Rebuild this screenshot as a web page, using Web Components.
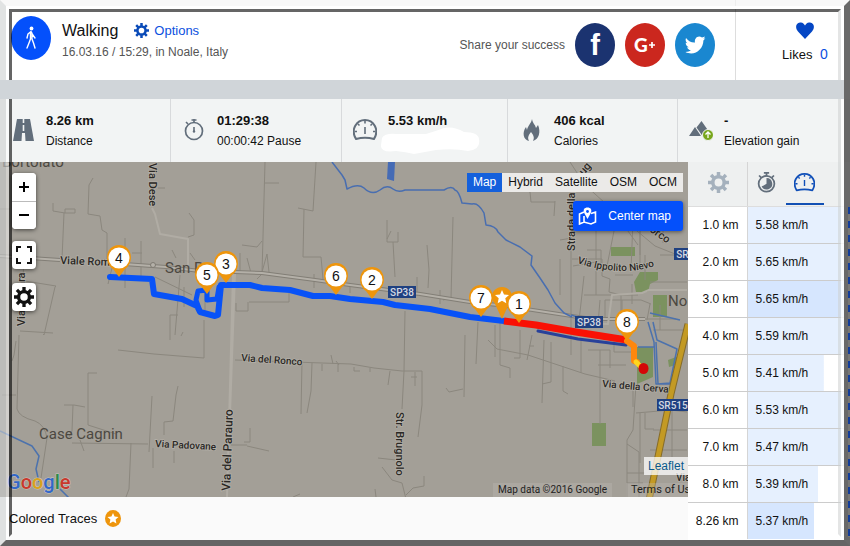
<!DOCTYPE html>
<html lang="en">
<head>
<meta charset="utf-8">
<title>Walking - 8.26 km</title>
<style>
  body {
    margin: 0;
    background: #fff;
    color: #111;
    font-family: "Liberation Sans", Arial, sans-serif;
    font-size: 12px;
  }
</style>
</head>
<body>
<workout-page>
  <workout-header slot="header"></workout-header>
  <stat-item slot="stats" icon="road" value="8.26 km">Distance</stat-item>
  <stat-item slot="stats" icon="timer" value="01:29:38">00:00:42 Pause</stat-item>
  <stat-item slot="stats" icon="gauge" value="5.53 km/h">
    <svg width="100" height="28" viewBox="0 0 100 28" style="display:block;margin:-4px 0 -4px -8px"><path d="M2 11Q5 6 16 7H46Q56 4 64 1Q74-1 84 5Q98 5 99 12Q101 23 88 24Q74 21 56 23L34 27Q26 25 16 24Q0 26 1 18Z" fill="#fff"/></svg>
  </stat-item>
  <stat-item slot="stats" icon="flame" value="406 kcal">Calories</stat-item>
  <stat-item slot="stats" icon="hills" value="-">Elevation gain</stat-item>
  <route-map slot="map">
    <map-pin x="119" y="96">4</map-pin>
    <map-pin x="226" y="102">3</map-pin>
    <map-pin x="207" y="113">5</map-pin>
    <map-pin x="336" y="114">6</map-pin>
    <map-pin x="372" y="118">2</map-pin>
    <map-pin x="502" y="135" star></map-pin>
    <map-pin x="481" y="136">7</map-pin>
    <map-pin x="519" y="142">1</map-pin>
    <map-pin x="627" y="160">8</map-pin>
  </route-map>
  <split-table slot="splits"></split-table>
</workout-page>

<template id="pageTemplate">
  <style>
    :host { display: flex; flex-direction: column; position: relative; min-height: 100vh; box-sizing: border-box; padding-bottom: 6px; overflow: hidden; }
    .band { height: 19px; background: #d0d5d9; margin-right: 6px; position: relative; z-index: 3; }
    .stats { display: grid; grid-template-columns: 171fr 171fr 166fr 170fr 172fr; background: #f2f4f4; height: 63px; }
    .main { flex: 1; display: grid; grid-template-columns: minmax(0, 1fr) 162px; }
    .left { display: flex; flex-direction: column; }
    .traces { display: flex; align-items: center; gap: 8px; height: 43px; padding-left: 9px; background: #fafafa; font-size: 13px; }
    /* bevelled picture frame laid over the page */
    .frame { position: absolute; inset: 0; z-index: 2; pointer-events: none; display: flex;
      border: 6px solid; border-color: rgba(245,245,245,.7) rgba(80,80,80,.85) rgba(85,85,85,.9) rgba(205,208,208,.6); }
    .frame div { flex: 1; display: flex; border: 3px solid; border-color: #fff rgba(255,255,255,.8) transparent rgba(255,255,255,.5); }
    .frame div div { border-color: rgba(0,0,0,.6) rgba(205,208,208,.55) transparent rgba(0,0,0,.6); }
  </style>
  <slot name="header"></slot>
  <div class="band"></div>
  <div class="stats"><slot name="stats"></slot></div>
  <div class="main">
    <div class="left">
      <slot name="map"></slot>
      <div class="traces">Colored Traces
        <svg width="16" height="17" viewBox="0 0 16 17"><ellipse cx="8" cy="8.5" rx="8" ry="8.5" fill="#ee950c"/><path d="M8 3l1.6 3.6 3.9.4-2.9 2.6.8 3.9L8 11.5l-3.4 2 .8-3.9L2.5 7l3.9-.4z" fill="#fff"/></svg>
      </div>
    </div>
    <slot name="splits"></slot>
  </div>
  <div class="frame"><div><div></div></div></div>
</template>

<template id="headerTemplate">
  <style>
    :host { display: flex; height: 80px; background: #fff; }
    .sport { margin: 16px 11px 0; }
    .title { flex: 1; padding-top: 19px; }
    .row { display: flex; align-items: center; height: 23px; }
    h1 { font-size: 16px; font-weight: normal; margin: 0 16px 0 0; }
    a { color: #0b50e0; text-decoration: none; font-size: 13px; display: flex; align-items: center; gap: 5px; }
    .when { color: #555; line-height: 20px; }
    .share { display: flex; align-items: center; gap: 10px; padding: 10px 20px 0 0; color: #555; }
    .likes { box-sizing: border-box; width: 115px; border-left: 1px solid #ddd; padding: 22px 0 0 24px; font-size: 13px; text-align: center; }
    .likes svg { display: block; margin: 0 auto; }
    .likes div { line-height: 20px; margin-top: 5px; }
    .likes svg, .likes div { margin-left: auto; margin-right: auto; }
    .likes b { color: #0b50e0; font-weight: normal; margin-left: 4px; font-size: 14px; }
  </style>
  <svg class="sport" width="40" height="44" viewBox="0 0 40 44"><ellipse cx="20" cy="22" rx="20" ry="22" fill="#0450fb"/><g fill="none" stroke="#fff" stroke-width="1.4" stroke-linecap="round" stroke-linejoin="round"><path d="M20 15.500l-3 2.500-1 4M20 15.500l1.500 3 2.500 3.500M19.500 16v7l-1.500 4-2 5M21 17v6l1.500 4 1.500 5"/></g><circle cx="20.500" cy="12.500" r="1.900" fill="#fff"/></svg>
  <div class="title">
    <div class="row">
      <h1>Walking</h1>
      <a href="#options"><ui-icon name="gear" size="15" style="color:#0a4bb8"></ui-icon>Options</a>
    </div>
    <div class="when">16.03.16 / 15:29, in Noale, Italy</div>
  </div>
  <div class="share">
    <span>Share your success</span>
    <share-button color="#1b3370" label="Facebook"></share-button>
    <share-button color="#cb271e" label="Google Plus"></share-button>
    <share-button color="#1a87d0" label="Twitter"></share-button>
  </div>
  <div class="likes">
    <svg width="18" height="17" viewBox="0 0 18 17"><path d="M9 17L2 9.500C-1 6-.500 1 4 .500 6.500 0 8 1.500 9 3.500 10 1.500 11.500 0 14 .500 18.500 1 19 6 16 9.500Z" fill="#0446c4"/></svg>
    <div>Likes <b>0</b></div>
  </div>
</template>

<template id="mapTemplate">
  <style>
    :host { display: block; position: relative; flex: 1; min-height: 335px; overflow: hidden; background: #a39f97; }
    .ground { position: absolute; inset: 0; width: 100%; height: 100%; font-family: Roboto, sans-serif; }
    .tools { position: absolute; left: 12px; top: 11px; display: flex; flex-direction: column; }
    .tools > * { border-radius: 4px; box-shadow: 0 1px 4px rgba(0,0,0,.6); background: #fff; }
    button { border: 0; margin: 0; padding: 0; font: inherit; color: inherit; background: none; cursor: pointer; }
    .tools button { display: flex; align-items: center; justify-content: center; width: 24px; height: 28px; background: #fff; }
    .zoom { display: flex; flex-direction: column; overflow: hidden; margin-bottom: 12px; }
    .zoom button + button { border-top: 1px solid #bbb; }
    .full { margin-bottom: 14px; }
    .right { position: absolute; top: 11px; right: 5px; display: flex; flex-direction: column; align-items: flex-end; gap: 9px; }
    .layers { display: flex; background: #ebeae8; }
    .layers button { padding: 0 6px; line-height: 19px; }
    .layers .on { background: #1460dc; color: #fff; }
    .center { display: flex; align-items: center; gap: 11px; height: 30px; border-radius: 3px; background: #0450fb; color: #fff; box-shadow: 0 1px 4px rgba(0,0,0,.5); }
    .right .center { padding: 0 12px 0 5px; }
    .credit { position: absolute; right: 0; bottom: 0; display: flex; flex-direction: column; align-items: flex-end; font: 11px/14px Roboto, sans-serif; }
    .leaflet { background: rgba(255,255,255,.75); color: #0a5a8c; text-decoration: none; font: 12px/18px "Liberation Sans", Arial, sans-serif; padding: 0 4px; margin-bottom: 8px; }
    .legal { display: flex; gap: 14px; color: #222; white-space: nowrap; }
    .legal span, .legal a { background: rgba(190,187,180,.35); padding: 0 5px; color: inherit; text-decoration: none; }
    .legal span { font-size: 10px; }
    .legal a { width: 52px; overflow: hidden; }
  </style>
  <svg class="ground" viewBox="0 162 688 335" preserveAspectRatio="xMidYMid slice">
    <g fill="#7b925f">
      <path d="M611 247h24v9h-24zM592 423h14v23h-14zM653 295h14v22h-14zM634 282l6-10h18v8l-8 4-2 8h-12z"/>
      <path d="M637 347h16v30l-16 7zM668 360l11-4v8l-10 3z"/>
    </g>
    <g fill="none" stroke="#8b877e">
      <path d="M93 178l-4 7-1 29 12 2 2 14 5 3v28M53 203v8l12 2h10v-4H65v4M64 213l-2 46M189 213l5 7v15l-6 2M158 188h7M24 258l-3 60M0 209h10M25 281l31 5-1 1-11 48-1-1M20 331l33 2M19 335l-2 74q2 8 18 12 10 4 12 17l-6 40M16 341l-2 14-2 6M2 395h14M88 373v52l28 9M88 373h9M64 405h10l11 2M73 405l-1 26-4 8M72 443l76 1M80 440l4 11M131 443l-2 46-3 8M152 396l-3 56M178 386l-2 9-3 26-9 1v13M153 448v20M174 451v12M118 350l36 4 50 4V320M170 340v-25h8M181 336l2-4M108 284l4-16M125 238v50M141 241v38M132 253h10M172 250l4 8M190 253l5 7M180 275l-5 60M205 285v30M184 287v20"/>
      <path d="M265 162l-3 112-5 5M265 183h14M316 162l-3 49-15-3M304 209l-1 48 18 0 2 22M242 245l15 2 5-6M240 253v20M247 258l4 15M262 272l5-18 2 18M387 220v22h11v-10M393 242l2 35M391 231l-4 8M427 245l2 25-1 18M453 217l-2 82M417 277v19M440 290v14M443 300l8-2M249 302h40v-14M236 303v8h12v-9M314 274v14M350 284v9M405 311l-1 60M404 371l-2 38M235 360l30 1 86 3 23 4 28 3h20v34l-4 32M302 361l-1 53M312 363l-1 28-4 22M322 364v7M338 364v8M354 367v4h6M370 368v4M390 371l-2 14M415 372v14M411 377h6M465 335l-1 62M446 388l3 4 14-3M250 428v14h-6M247 446l22 5M231 445h16M378 458l18 2M382 467l10 13 10 3 4 16M406 495l7-7 11-2v-10M376 497l-1-8M293 497l7-3M331 355l2 9M336 361l3 4"/>
      <path d="M570 162l15 23 40 36 30 25M571 210v145M500 180l30 12 1 10h24M555 201l-1 15M596 225v70M614 231l-7 35M633 220l-2 50M640 230v38M655 246l30 12M596 262l-23 4M650 282h37M572 259h30v17l8 3-1 13 12 3v18M560 259v36M584 295h54M584 276l-5 45M605 320v-20h36l10 4M640 319h36M632 284v20M650 304l-3 16M600 300l-2 24M622 300v20M653 330h34M660 305v25"/>
      <path d="M488 340l9 9 31 6 33 11 24 8 30 7M500 323v42l10 3v10M495 325v32M478 322l-2 42M544 340l-2 63M563 366v25l5 3M532 335l-5 25M581 338v35M600 350v74M598 365h28M614 340v12h20M520 330v28h-6M534 346h-5M551 342v40l-9 2M588 350h22v18M636 384l-3 46-6 10v60M636 413l35-3 16 2M640 413v50M627 444l12 8v48M627 473h18M627 483h16M645 413v16h9M650 450h37M653 430h34M660 460l-5 12M672 387v70M633 385v22"/>
      <path d="M155 277l37 18M560 240l12-2M600 225h40v30M615 275h18M645 255v25M620 220l18 25M587 250h14v16M663 213v30M660 255h27"/>
    </g>
    <g fill="none" stroke-linejoin="round">
      <path d="M0 256l60 4M110 263l56 4 34 4 35 1 27 1 53 7 35 5 70 9 50 8 37 4 78 12 20 1h40" stroke="#827e76" stroke-width="4"/>
      <path d="M0 256l60 4M110 263l56 4 34 4 35 1 27 1 53 7 35 5 70 9 50 8 37 4 78 12 20 1h40" stroke="#b4b0a8" stroke-width="2"/>
      <path d="M235 274l-5 140M233 274l-6 223M577 323l31 1 4-29 30-2 7-3h38M152 208l3 6 5 20 28 5v27" stroke="#b0aca4" stroke-width="2"/>
      <path d="M332 162L342 175 345 180 347 189Q358 183 364 188 372 196 380 190 387 184 393 189 398 193 405 190L430 190 444 190Q452 185 455 190 459 191 462 203L472 204Q478 202 484 213L486 225Q496 226 498 232L506 240 520 247 532 256 531 265 540 278 548 290 555 303 564 313 572 317" stroke="#496eb0" stroke-width="1.500" stroke-linejoin="round"/>
      <path d="M0 431l32 15 7 10-3 13 3 13M60 489l10 10M571 315l26 8M648 322l6 20 2 42h14l6-16M653 322l4 18 20 9-7 34-12 1-2-42M638 347h17M680 320l-30-7" stroke="#4c72ad" stroke-width="1.500"/>
      <path d="M688 324l-17 70-22 106" stroke="#866c29" stroke-width="7"/>
      <path d="M688 324l-17 70-22 106" stroke="#c39a24" stroke-width="5"/>
    </g>
    <path d="M388 162h7l-1 19-7-2z" fill="#456bb5"/>
    <circle cx="153" cy="265" r="2.500" fill="#b5b1a9" stroke="#7e7a72"/>
    <g fill="#2a2825" font-size="11" font-weight="500" stroke="#b4b0a8" stroke-width="1.500" paint-order="stroke">
      <text transform="translate(60 264) rotate(2)">Viale Rom</text>
      <text transform="translate(149 163) rotate(90)">Via Dese</text>
      <text transform="translate(25 326) rotate(-90)">Via Ferrara</text>
      <text transform="translate(241 361) rotate(4)" font-size="10">Via del Ronco</text>
      <text transform="translate(396 412) rotate(90)" font-size="11">Str. Brugnolo</text>
      <text transform="translate(230 491) rotate(-88)" font-size="12">Via del Parauro</text>
      <text transform="translate(155 447) rotate(3)" font-size="10">Via Padovane</text>
      <text transform="translate(602 387) rotate(5)" font-size="10">Via della Cerva</text>
      <text transform="translate(575 251) rotate(-90)">Strada della</text>
      <text transform="translate(580 180) rotate(-50)">sug</text>
      <text transform="translate(649 231) rotate(35)">orco</text>
      <path id="nievo" d="M577 263Q622 278 658 265" fill="none" stroke="none"/>
      <text font-size="10"><textPath href="#nievo">Via Ippolito Nievo</textPath></text>
      <text x="676" y="481" font-size="10">Via</text>
    </g>
    <g fill="#4c4841" font-size="15">
      <text x="2" y="167">Bortolato</text>
      <text x="165" y="273">San P</text>
      <text x="39" y="439">Case Cagnin</text>
      <text x="668" y="306">No</text>
    </g>
    <g fill="#1f4080"><path d="M388 286h28v12h-28zM575 316h28v12h-28zM674 248h28v12h-28zM657 399h31v12h-31z"/></g>
    <g fill="#d5d9e2" font-size="10" font-weight="500" text-anchor="middle">
      <text x="402" y="296">SP38</text><text x="589" y="326">SP38</text><text x="691" y="258">SR515</text><text x="673" y="409">SR515</text>
    </g>
    <text x="7" y="489" font-size="20" font-weight="500" stroke="#c8c6c0" stroke-width="1" paint-order="stroke"><tspan fill="#3267c8">G</tspan><tspan fill="#c9382c">o</tspan><tspan fill="#d9a21c">o</tspan><tspan fill="#3267c8">g</tspan><tspan fill="#2d8b47">l</tspan><tspan fill="#c9382c">e</tspan></text>
    <g fill="none" stroke-linejoin="round" stroke-linecap="round">
      <path d="M110 277L152 279 154 294 182 299 197 306 200 312 215 316 218 315 221 285 250 285 262 288 290 290 313 296 330 296 350 299 383 302 395 305 430 309 470 317 504 321" stroke="#0852f7" stroke-width="6"/>
      <path d="M200 311l-4-11 2-9 9-1v10l10-1 2-12" stroke="#0852f7" stroke-width="5"/>
      <path d="M538 331l40 8 48 6" stroke="#28419a" stroke-width="3"/>
      <path d="M504 321l32 4 40 7 51 8" stroke="#f91105" stroke-width="7" stroke-linecap="butt"/>
      <path d="M627 341l7 5v15l3 1" stroke="#ff870d" stroke-width="6"/>
      <path d="M636 362l5 5" stroke="#ffd51e" stroke-width="5"/>
    </g>
    <ellipse cx="643.500" cy="368.500" rx="5" ry="5.500" fill="#d30808"/>
  </svg>
  <slot></slot>
  <div class="tools">
    <div class="zoom">
      <button aria-label="Zoom in"><svg width="12" height="12"><path d="M6 1v10M1 6h10" stroke="#000" stroke-width="2"/></svg></button>
      <button aria-label="Zoom out"><svg width="12" height="12"><path d="M1 5h10" stroke="#000" stroke-width="2"/></svg></button>
    </div>
    <button class="full" aria-label="Full screen"><svg width="18" height="18"><path d="M2 6V1h4M12 1h4v5M16 12v5h-4M6 17H2v-5" stroke="#111" stroke-width="2" fill="none"/></svg></button>
    <button aria-label="Map settings"><ui-icon name="gear" size="20"></ui-icon></button>
  </div>
  <div class="right">
    <div class="layers">
      <button class="on">Map</button><button>Hybrid</button><button>Satellite</button><button>OSM</button><button>OCM</button>
    </div>
    <button class="center"><svg width="19" height="18" viewBox="0 0 19 18"><path d="M6 5L1.500 7v10L6 15l7 2 4.500-2V5L13 6.500M6 15V9" stroke="#fff" stroke-width="1.600" fill="none"/><path d="M9.500 12L6.500 6.500C4.500 2.500 6.500.500 9.500.500s5 2 3 6z" fill="#fff"/><circle cx="9.500" cy="4.500" r="1.400" fill="#0450fb"/></svg>Center map</button>
  </div>
  <div class="credit">
    <a class="leaflet" href="#leaflet">Leaflet</a>
    <div class="legal"><span>Map data ©2016 Google</span><a href="#terms">Terms of Use</a></div>
  </div>
</template>

<template id="splitsTemplate">
  <style>
    :host { display: block; position: relative; background: #fff; }
    /* dashed strip at the page edge */
    :host::after { content: ""; position: absolute; z-index: 4; right: 0; top: 45px; bottom: 3px; width: 2px; background: repeating-linear-gradient(#123d9a 0 7px, #777 7px 14px); }
    table { border-collapse: collapse; width: 156px; table-layout: fixed; }
    th { height: 44px; padding: 0; background: #eef0f0; font-weight: normal; border-bottom: 1px solid #ddd; box-sizing: border-box; }
    th:first-child, td:first-child { width: 59px; border-right: 1px solid #d5d5d5; }
    td { height: 36px; padding: 0; border-bottom: 1px solid #ccc; }
    tr:last-child td { border-bottom: 0; }
    td:first-child { text-align: right; padding-right: 8px; width: 51px; }
    td:last-child { padding-left: 8px; background: linear-gradient(var(--fill, #e6f0fe) 0 0) no-repeat 0 0 / var(--bar, 100%) 100%; }
    .modes { display: flex; }
    button { display: flex; align-items: center; justify-content: center; width: 38px; height: 43px; padding: 0; border: 0; border-bottom: 2px solid transparent; background: none; color: #626e7b; box-sizing: border-box; }
    th:first-child button { width: 100%; padding-left: 3px; color: #a5b1bd; }
    .on { color: #104fb8; border-bottom-color: #1250b4; }
  </style>
  <table>
    <thead><tr>
      <th><button aria-label="Settings"><ui-icon name="gear" size="21"></ui-icon></button></th>
      <th><div class="modes">
        <button aria-label="Pace"><ui-icon name="pace" size="21"></ui-icon></button>
        <button class="on" aria-label="Speed"><ui-icon name="gauge" size="21"></ui-icon></button>
      </div></th>
    </tr></thead>
    <tbody></tbody>
  </table>
</template>

<script>
  (function workout(customElements, document) {
    'use strict';

    const ICONS = {
      gear: '<circle cx="12" cy="12" r="6.500" fill="none" stroke="currentColor" stroke-width="4"/><path d="M12 0v5M12 19v5M0 12h5M19 12h5M3.500 3.500L7 7M17 17l3.500 3.500M3.500 20.500L7 17M17 7l3.500-3.500" stroke="currentColor" stroke-width="4"/>',
      road: '<path d="M6 1h13l4 22H2z" fill="currentColor"/><path d="M12.500 1v4M12.500 7v6" stroke="#f2f4f4" stroke-width="1.600"/><path d="M11 15h3l.5 8h-4z" fill="#f2f4f4"/>',
      timer: '<circle cx="12" cy="13" r="8.500" fill="none" stroke="currentColor" stroke-width="1.700"/><path d="M12 1v4M4 4l2 2M12 9v5M9.500 2h5" stroke="currentColor" stroke-width="1.600"/><circle cx="12" cy="13.500" r="1.200" fill="currentColor"/>',
      gauge: '<path d="M3 21C-3 11 4 2 12 2s15 9 9 19Q12 18.500 3 21z" fill="none" stroke="currentColor" stroke-width="2" stroke-linejoin="round"/><path d="M12 9v7M12 3v2.500M5 6l1.500 1.500M19 6l-1.500 1.500M1.500 13.500H4M20 13.500h2.500" stroke="currentColor" stroke-width="1.600"/>',
      flame: '<path d="M13 1c1 5 3 5 4 9l2-3c3 7 1 14-5 16 2-4 0-6-2-9-2 3-4 5-2 9-6-1-7-9-3-14l1 3c1-5 4-6 5-11z" fill="currentColor"/>',
      hills: '<path d="M0 18l6-9 6 9zM7.500 9.500L12.500 3l7 10-6 5z" fill="currentColor"/><circle cx="19" cy="17" r="5.500" fill="#78a61c" stroke="#f2f4f4"/><path d="M19 20v-6M16.500 16.500L19 14l2.500 2.500" stroke="#fff" stroke-width="1.300" fill="none"/>',
      pace: '<circle cx="12" cy="13.500" r="9" fill="none" stroke="currentColor" stroke-width="2"/><path d="M9 1h6M12 1v4M3.500 4l2.500 2.500M20.500 4L18 6.500" stroke="currentColor" stroke-width="2"/><path d="M12 13.500V7a6.500 6.500 0 1 1-5.600 9.700z" fill="currentColor"/>'
    };

    const LOGOS = {
      'Facebook': '<text x="20" y="32" text-anchor="middle" font-size="29" font-weight="bold">f</text>',
      'Google Plus': '<text x="9" y="29" font-size="19" font-weight="900" font-family="Lato">G</text><path d="M24 22h6M27 19v6" stroke="#fff" stroke-width="1.700"/>',
      'Twitter': '<path d="M11 15q4 5 9 4.500c-1-4 3-8 7-5 1.500-.300 2-.800 3-1-.300 1-1 1.800-1.600 2.200l2-.400-2 2.200c0 9-9 16-18 11.500 2.500 0 4-.500 5.500-1.700-2-.300-3-1.300-3.800-3h1.800c-2-.700-3.200-2.300-3.200-4.500l1.700.500c-1.600-1.300-2.200-3.200-1.400-5.300z" fill="#fff"/>'
    };

    // km, speed, bar width, bar colour
    const SPLITS = [
      ['1.0', '5.58'], ['2.0', '5.65'], ['3.0', '5.65', '100%', '#d6e6fe'],
      ['4.0', '5.59'], ['5.0', '5.41', '79%'], ['6.0', '5.53'],
      ['7.0', '5.47'], ['8.0', '5.39', '73%'], ['8.26', '5.37', '69%', '#d6e6fe']
    ];

    function stamp(host, id) {
      const root = host.attachShadow({mode: 'open'});
      root.appendChild(document.importNode(document.getElementById(id).content, true));
      return root;
    }

    class UiIcon extends HTMLElement {
      connectedCallback() {
        if (this.shadowRoot) return;
        const size = this.getAttribute('size') || 24;
        this.attachShadow({mode: 'open'}).innerHTML = `
          <style>:host { display: inline-flex; }</style>
          <svg width="${size}" height="${size}" viewBox="0 0 24 24">${ICONS[this.getAttribute('name')]}</svg>`;
      }
    }

    class ShareButton extends HTMLElement {
      connectedCallback() {
        if (this.shadowRoot) return;
        const label = this.getAttribute('label');
        this.attachShadow({mode: 'open'}).innerHTML = `
          <style>
            :host { display: block; }
            button { display: block; border: 0; padding: 0; background: none; cursor: pointer; }
            svg { display: block; }
          </style>
          <button aria-label="${label}">
            <svg width="40" height="44" viewBox="0 0 40 44" fill="#fff" font-family="Liberation Sans">
              <ellipse cx="20" cy="22" rx="20" ry="22" fill="${this.getAttribute('color')}"/>${LOGOS[label]}
            </svg>
          </button>`;
      }
    }

    class StatItem extends HTMLElement {
      connectedCallback() {
        if (this.shadowRoot) return;
        this.attachShadow({mode: 'open'}).innerHTML = `
          <style>
            :host { display: flex; gap: 10px; padding: 12px 0 0 10px; border-right: 1px solid #d8dadc; }
            :host(:last-of-type) { border-right: 0; }
            ui-icon { color: #626e7b; padding-top: 7px; width: 26px; justify-content: center; }
            b { display: block; font-size: 13px; line-height: 20px; }
            .label { line-height: 21px; }
          </style>
          <ui-icon name="${this.getAttribute('icon')}" size="24"></ui-icon>
          <div><b>${this.getAttribute('value')}</b><div class="label"><slot></slot></div></div>`;
      }
    }

    class MapPin extends HTMLElement {
      connectedCallback() {
        if (this.shadowRoot) return;
        const star = this.hasAttribute('star');
        this.style.left = this.getAttribute('x') + 'px';
        this.style.top = this.getAttribute('y') + 'px';
        this.attachShadow({mode: 'open'}).innerHTML = `
          <style>
            :host { position: absolute; width: 28px; height: 36px; margin: -14px 0 0 -14px; }
            svg { position: absolute; left: 0; top: 0; }
            span { position: relative; display: block; text-align: center; font-size: 14px; line-height: 28px; }
          </style>
          <svg width="28" height="36" viewBox="0 0 28 36">
            ${star ? '<path d="M14 36L7 21C0 13 6 4 14 4s14 9 7 17z" fill="#ee950c"/><path d="M14 7l2 4.500 5 .500-3.700 3.300 1 5-4.300-2.500-4.300 2.500 1-5L7 12l5-.500z" fill="#fff"/>'
                   : '<path d="M14 33L8 25C-2 18 1 1 14 1s16 17 6 24z" fill="#ee950c"/><circle cx="14" cy="14" r="10.500" fill="#fff"/>'}
          </svg>
          <span><slot></slot></span>`;
      }
    }

    class WorkoutPage extends HTMLElement {
      constructor() { super(); stamp(this, 'pageTemplate'); }
    }

    class WorkoutHeader extends HTMLElement {
      constructor() { super(); stamp(this, 'headerTemplate'); }
    }

    class RouteMap extends HTMLElement {
      constructor() { super(); stamp(this, 'mapTemplate'); }
    }

    class SplitTable extends HTMLElement {
      constructor() {
        super();
        const root = stamp(this, 'splitsTemplate');
        root.querySelector('tbody').innerHTML = SPLITS.map(([km, speed, bar = '100%', fill = '#e6f0fe']) =>
          `<tr><td>${km} km</td><td style="--bar:${bar};--fill:${fill}">${speed} km/h</td></tr>`).join('');
      }
    }

    customElements.define('ui-icon', UiIcon);
    customElements.define('share-button', ShareButton);
    customElements.define('stat-item', StatItem);
    customElements.define('map-pin', MapPin);
    customElements.define('workout-page', WorkoutPage);
    customElements.define('workout-header', WorkoutHeader);
    customElements.define('route-map', RouteMap);
    customElements.define('split-table', SplitTable);
  })(window.customElements, document)
</script>
</body>
</html>
